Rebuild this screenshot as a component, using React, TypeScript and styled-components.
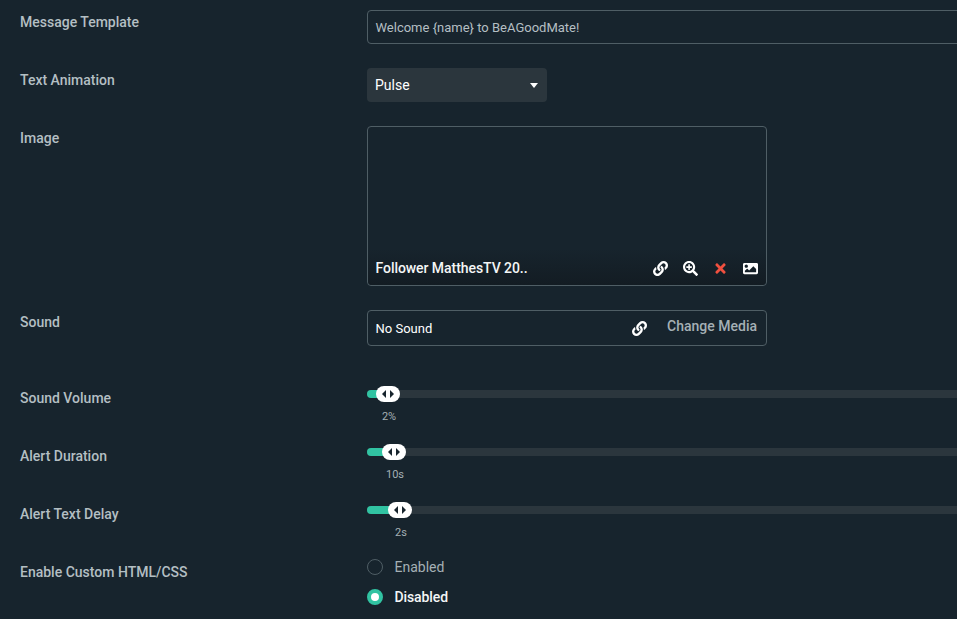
import React from "react";
import styled, { createGlobalStyle } from "styled-components";
import { FaLink, FaSearchPlus, FaTimes, FaImage } from "react-icons/fa";

const Global = createGlobalStyle`
  html, body { margin: 0; padding: 0; background: #17242d; overflow: hidden; height: 100%; }
  body { font-family: Roboto, "Liberation Sans", sans-serif; }
`;

const Page = styled.div`
  width: 1100px;
  height: 619px;
  padding: 10px 0 0 20px;
  box-sizing: border-box;
  background: #17242d;
  display: flex;
  flex-direction: column;
  overflow: hidden;
`;

const Row = styled.div<{ $gap: number }>`
  display: grid;
  grid-template-columns: 347px 1fr;
  margin-bottom: ${(p) => p.$gap}px;
`;

const Label = styled.div<{ $drop?: number }>`
  font-size: 14px;
  font-weight: 500;
  line-height: 24px;
  color: #b4bfc3;
  padding-top: ${(p) => p.$drop ?? 0}px;
`;

const TextBox = styled.div`
  height: 34px;
  box-sizing: border-box;
  border: 1px solid #4f5e65;
  border-radius: 4px;
  padding: 0 8px 0 7.5px;
  display: flex;
  align-items: center;
  font-size: 13px;
  color: #b4bfc3;
`;

const Select = styled.div`
  width: 180px;
  height: 34px;
  box-sizing: border-box;
  border-radius: 4px;
  background: #2b363d;
  padding: 0 9px 0 8px;
  display: flex;
  align-items: center;
  justify-content: space-between;
  font-size: 14px;
  color: #ffffff;
`;

const Caret = styled.span`
  width: 0;
  height: 0;
  border-left: 4px solid transparent;
  border-right: 4px solid transparent;
  border-top: 5px solid #fff;
`;

const ImageBox = styled.div`
  width: 400px;
  height: 160px;
  box-sizing: border-box;
  border: 1px solid #4f5e65;
  border-radius: 4px;
  display: flex;
  flex-direction: column;
  justify-content: flex-end;
`;

const ImageBar = styled.div`
  height: 36px;
  padding: 2px 8px 0 7.5px;
  box-sizing: border-box;
  display: flex;
  align-items: center;
  justify-content: space-between;
  background: linear-gradient(to bottom, #17242d, #131c23);
  border-radius: 0 0 4px 4px;
`;

const FileName = styled.span`
  font-size: 14px;
  font-weight: 500;
  letter-spacing: -0.06px;
  color: #f4f6f6;
`;

const Icons = styled.div`
  display: flex;
  align-items: center;
  gap: 15px;
`;

const IconSlot = styled.span<{ $danger?: boolean }>`
  display: inline-flex;
  font-size: 15px;
  color: ${(p) => (p.$danger ? "#f0503f" : "#ffffff")};
`;

const SoundBox = styled.div`
  width: 400px;
  height: 36px;
  box-sizing: border-box;
  border: 1px solid #4f5e65;
  border-radius: 4px;
  padding: 0 9px 0 7.5px;
  display: flex;
  align-items: center;
  font-size: 13px;
  color: #ffffff;
`;

const SoundName = styled.span`
  flex: 1;
`;

const ChangeMedia = styled.span`
  margin-left: 20px;
  font-size: 14px;
  font-weight: 500;
  color: #a5b0b5;
  position: relative;
  top: -2px;
`;

const Slider = styled.div`
  position: relative;
  height: 8px;
  margin-top: 8px;
  border-radius: 4px;
  background: #2b363d;
`;

const SliderFill = styled.div`
  height: 8px;
  border-radius: 4px 0 0 4px;
  background: #31c3a2;
`;

const Handle = styled.div`
  position: absolute;
  top: -4px;
  width: 24px;
  height: 16px;
  margin-left: -12px;
  border-radius: 8px;
  background: #fff;
  display: flex;
  align-items: center;
  justify-content: center;
  gap: 4px;
`;

const Arrow = styled.span<{ $dir: "l" | "r" }>`
  width: 0;
  height: 0;
  border-top: 4px solid transparent;
  border-bottom: 4px solid transparent;
  ${(p) => (p.$dir === "l" ? "border-right: 4px solid #17242d;" : "border-left: 4px solid #17242d;")}
`;

const SliderValue = styled.div`
  position: absolute;
  top: 19px;
  transform: translateX(-50%);
  margin-left: 1px;
  font-size: 11px;
  line-height: 16px;
  color: #a5b0b5;
`;

const Radios = styled.div`
  display: flex;
  flex-direction: column;
  gap: 12px;
  padding-top: 2px;
`;

const RadioRow = styled.div<{ $on?: boolean }>`
  display: flex;
  align-items: center;
  gap: 11.5px;
  height: 18px;
  font-size: 14px;
  font-weight: ${(p) => (p.$on ? 500 : 400)};
  letter-spacing: ${(p) => (p.$on ? "-0.1px" : "0")};
  color: ${(p) => (p.$on ? "#f4f6f6" : "#a5b0b5")};
`;

const RadioDot = styled.span<{ $on?: boolean }>`
  width: 16px;
  height: 16px;
  box-sizing: border-box;
  border-radius: 50%;
  ${(p) =>
    p.$on
      ? "background: #fff; border: 4px solid #31c3a2;"
      : "border: 1px solid #4f5e65;"}
`;

const sliders = [
  { label: "Sound Volume", value: "2%", at: 21 },
  { label: "Alert Duration", value: "10s", at: 27 },
  { label: "Alert Text Delay", value: "2s", at: 33 },
];

export default function App() {
  return (
    <Page>
      <Global />
      <Row $gap={24}>
        <Label>Message Template</Label>
        <TextBox>Welcome {"{name}"} to BeAGoodMate!</TextBox>
      </Row>
      <Row $gap={24}>
        <Label>Text Animation</Label>
        <Select>
          Pulse
          <Caret />
        </Select>
      </Row>
      <Row $gap={24}>
        <Label>Image</Label>
        <ImageBox>
          <ImageBar>
            <FileName>Follower MatthesTV 20..</FileName>
            <Icons>
              <IconSlot><FaLink /></IconSlot>
              <IconSlot><FaSearchPlus /></IconSlot>
              <IconSlot $danger><FaTimes /></IconSlot>
              <IconSlot><FaImage /></IconSlot>
            </Icons>
          </ImageBar>
        </ImageBox>
      </Row>
      <Row $gap={36}>
        <Label>Sound</Label>
        <SoundBox>
          <SoundName>No Sound</SoundName>
          <IconSlot><FaLink /></IconSlot>
          <ChangeMedia>Change Media</ChangeMedia>
        </SoundBox>
      </Row>
      {sliders.map((s) => (
        <Row $gap={30} key={s.label}>
          <Label $drop={4}>{s.label}</Label>
          <Slider>
            <SliderFill style={{ width: s.at }} />
            <Handle style={{ left: s.at }}>
              <Arrow $dir="l" />
              <Arrow $dir="r" />
            </Handle>
            <SliderValue style={{ left: s.at }}>{s.value}</SliderValue>
          </Slider>
        </Row>
      ))}
      <Row $gap={0}>
        <Label $drop={4}>Enable Custom HTML/CSS</Label>
        <Radios>
          <RadioRow>
            <RadioDot />
            Enabled
          </RadioRow>
          <RadioRow $on>
            <RadioDot $on />
            Disabled
          </RadioRow>
        </Radios>
      </Row>
    </Page>
  );
}
